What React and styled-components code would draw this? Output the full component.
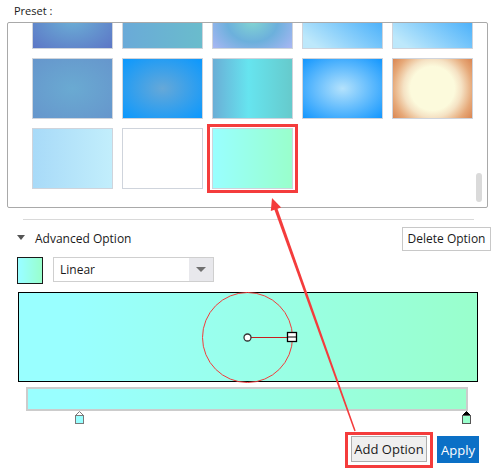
import React from "react";
import styled, { createGlobalStyle } from "styled-components";

const Global = createGlobalStyle`
  html, body { margin: 0; padding: 0; background: #fff; }
  body { font-family: "Open Sans", "Noto Sans", sans-serif; color: #1a1a1a; }
  * { box-sizing: border-box; }
`;

const Page = styled.div`
  position: relative;
  width: 497px;
  height: 469px;
  overflow: hidden;
  background: #fff;
`;

const PresetLabel = styled.div`
  height: 22px;
  padding: 3px 0 0 14px;
  font-size: 11px;
  line-height: 15px;
  color: #1a1a1a;
`;

const PresetBox = styled.div`
  position: relative;
  margin-left: 7px;
  width: 481px;
  height: 186px;
  border: 1px solid #a9a9a9;
  border-radius: 2px;
  overflow: hidden;
`;

const ThumbGrid = styled.div`
  display: grid;
  grid-template-columns: repeat(5, 81px);
  grid-auto-rows: 61px;
  column-gap: 9px;
  row-gap: 9px;
  padding-left: 24px;
  margin-top: -35px;
`;

const Thumb = styled.div`
  position: relative;
  border: 1px solid #cfd4dc;
  background: ${(p) => p.$bg};
  ${(p) =>
    p.$selected &&
    `
    &::after {
      content: "";
      position: absolute;
      left: -6px; right: -6px; top: -5px; bottom: -5px;
      border: 3px solid #f43c3c;
    }
  `}
`;

const ScrollThumb = styled.div`
  position: absolute;
  left: 468px;
  top: 150px;
  width: 6px;
  height: 29px;
  border-radius: 3px;
  background: #dadada;
`;

const Divider = styled.div`
  margin: 11px 0 0 23px;
  width: 451px;
  height: 1px;
  background: #d9d9d9;
`;

const AdvHeader = styled.div`
  display: flex;
  align-items: center;
  justify-content: space-between;
  margin-top: 7px;
  height: 24px;
  padding: 0 6px 0 17px;
`;

const Toggle = styled.div`
  display: flex;
  align-items: center;
  font-size: 12px;
  line-height: 16px;
  color: #1a1a1a;
`;

const Caret = styled.span`
  width: 0;
  height: 0;
  border-left: 4px solid transparent;
  border-right: 4px solid transparent;
  border-top: 5px solid #555;
  margin: 0 10px 4px 0;
`;

const PlainButton = styled.button`
  height: 24px;
  width: ${(p) => p.$w}px;
  padding: 0;
  border: 1px solid #c8c8c8;
  background: ${(p) => (p.$gray ? "#efefef" : "#fff")};
  font-family: inherit;
  font-size: ${(p) => p.$fs || 12}px;
  color: #1a1a1a;
  line-height: 16px;
  cursor: pointer;
`;

const TypeRow = styled.div`
  display: flex;
  align-items: flex-start;
  margin-top: 6px;
  padding-left: 17px;
`;

const Swatch = styled.div`
  width: 26px;
  height: 27px;
  border: 1px solid #1a1a1a;
  background: linear-gradient(to right, #99ffff 12%, #99ffcc);
`;

const Select = styled.div`
  display: flex;
  margin-left: 10px;
  width: 161px;
  height: 25px;
  border: 1px solid #cfcfcf;
  background: #fff;
`;

const SelectText = styled.div`
  flex: 1;
  padding-left: 6px;
  font-size: 12px;
  line-height: 23px;
  color: #1a1a1a;
`;

const SelectArrow = styled.div`
  width: 24px;
  display: flex;
  align-items: center;
  justify-content: center;
  background: #e8e8ec;
  &::after {
    content: "";
    width: 0;
    height: 0;
    border-left: 5px solid transparent;
    border-right: 5px solid transparent;
    border-top: 5px solid #707070;
  }
`;

const Preview = styled.div`
  position: relative;
  margin: 8px 0 0 18px;
  width: 460px;
  height: 90px;
  border: 1px solid #000;
  background: linear-gradient(to right, #99ffff 12%, #99ffcc);
`;

const PreviewSvg = styled.svg`
  display: block;
  overflow: visible;
`;

const BarWrap = styled.div`
  margin: 5px 0 0 26px;
  width: 442px;
`;

const Bar = styled.div`
  height: 24px;
  border: 2px solid #cccccc;
  background: linear-gradient(to right, #99ffff 12%, #99ffcc);
`;

const StopTrack = styled.div`
  position: relative;
  height: 14px;
`;

const StopMark = styled.svg`
  position: absolute;
  top: 0;
  display: block;
`;

const Actions = styled.div`
  display: flex;
  justify-content: flex-end;
  align-items: flex-start;
  gap: 10px;
  margin-top: 11px;
  padding-right: 18px;
`;

const Highlight = styled.div`
  position: relative;
  &::after {
    content: "";
    position: absolute;
    left: -6px; right: -6px; top: -4px; bottom: -6px;
    border: 3px solid #f43c3c;
    pointer-events: none;
  }
`;

const PrimaryButton = styled.button`
  height: 27px;
  width: 42px;
  padding: 0;
  border: none;
  background: #0b70c6;
  color: #fff;
  font-family: inherit;
  font-size: 13px;
  line-height: 16px;
  cursor: pointer;
`;

const Overlay = styled.svg`
  position: absolute;
  left: 0;
  top: 0;
  pointer-events: none;
`;

const thumbs = [
  "radial-gradient(ellipse at center, #6cb0d6 0%, #5c76c6 100%)",
  "linear-gradient(to right, #6aaad8, #6abccc)",
  "radial-gradient(ellipse at 50% 55%, #82d4d2 0%, #6cb0dc 45%, #b4b8f8 100%)",
  "linear-gradient(to top right, #bde8fb 10%, #1898fa 100%)",
  "linear-gradient(to top right, #bde8fb 10%, #1898fa 100%)",
  "radial-gradient(ellipse at center, #6aaad2 0%, #6696cc 100%)",
  "radial-gradient(ellipse at center, #66a8d8 0%, #0a98fe 100%)",
  "linear-gradient(to right, #6aaed6 0%, #66e4ef 45%, #66cacc 100%)",
  "radial-gradient(ellipse at center, #b4e2fc 0%, #1296fe 100%)",
  "radial-gradient(circle at center, #fcfadc 0px, #fcfadc 22px, #f5e2c4 29px, #e6a878 40px, #d2703a 55px)",
  "linear-gradient(to right, #a8daf8, #c2eefc)",
  "#ffffff",
  "linear-gradient(to right, #99ffff, #99ffcc)",
];

const stops = [
  { pos: 0.118, color: "#99ffff", selected: false },
  { pos: 1, color: "#99ffcc", selected: true },
];

function Stop({ pos, color, selected }) {
  const trackW = 442;
  const left = 2 + pos * (trackW - 4) - 4.5;
  return (
    <StopMark width="10" height="14" viewBox="0 0 10 14" style={{ left }}>
      <path
        d="M0.5 4.5 L4.5 0.5 L8.5 4.5 Z"
        fill={selected ? "#000" : "#fff"}
        stroke={selected ? "#000" : "#7a7a7a"}
        strokeWidth="1"
      />
      <rect x="0.5" y="4.5" width="8" height="8" fill={color} stroke={selected ? "#555" : "#7a7a7a"} strokeWidth="1" />
    </StopMark>
  );
}

function Arrow() {
  const ax = 272, ay = 198, ex = 355, ey = 431;
  const dx = ex - ax, dy = ey - ay;
  const len = Math.hypot(dx, dy);
  const ux = dx / len, uy = dy / len;
  const nx = uy, ny = -ux;
  const hl = 12, hw = 5.5;
  const bx = ax + ux * hl, by = ay + uy * hl;
  const p = (x, y) => `${x.toFixed(1)},${y.toFixed(1)}`;
  const head = [p(ax, ay), p(bx + nx * hw, by + ny * hw), p(bx - nx * hw, by - ny * hw)].join(" ");
  const w1 = 1.6, w2 = 0.7;
  const shaft = [
    p(bx - ux * 2 + nx * w1, by - uy * 2 + ny * w1),
    p(ex + nx * w2, ey + ny * w2),
    p(ex - nx * w2, ey - ny * w2),
    p(bx - ux * 2 - nx * w1, by - uy * 2 - ny * w1),
  ].join(" ");
  return (
    <Overlay width="497" height="469" viewBox="0 0 497 469">
      <polygon points={head} fill="#f43c3c" />
      <polygon points={shaft} fill="#f43c3c" />
    </Overlay>
  );
}

export default function App() {
  return (
    <Page>
      <Global />
      <PresetLabel>Preset :</PresetLabel>
      <PresetBox>
        <ThumbGrid>
          {thumbs.map((bg, i) => (
            <Thumb key={i} $bg={bg} $selected={i === 12} />
          ))}
        </ThumbGrid>
        <ScrollThumb />
      </PresetBox>
      <Divider />
      <AdvHeader>
        <Toggle>
          <Caret />
          Advanced Option
        </Toggle>
        <PlainButton $w={89}>Delete Option</PlainButton>
      </AdvHeader>
      <TypeRow>
        <Swatch />
        <Select>
          <SelectText>Linear</SelectText>
          <SelectArrow />
        </Select>
      </TypeRow>
      <Preview>
        <PreviewSvg width="458" height="88" viewBox="0 0 458 88">
          <circle cx="228.5" cy="44.5" r="45" fill="none" stroke="#f23c3c" strokeWidth="1" />
          <line x1="231.5" y1="44.5" x2="268" y2="44.5" stroke="#c81e1e" strokeWidth="1" />
          <circle cx="228.5" cy="44.5" r="3.5" fill="#fff" stroke="#333" strokeWidth="1.3" />
          <rect x="268.5" y="39.5" width="9" height="9" fill="#fff" stroke="#000" strokeWidth="1.3" />
          <line x1="269" y1="44" x2="277" y2="44" stroke="#000" strokeWidth="1" />
        </PreviewSvg>
      </Preview>
      <BarWrap>
        <Bar />
        <StopTrack>
          {stops.map((s, i) => (
            <Stop key={i} {...s} />
          ))}
        </StopTrack>
      </BarWrap>
      <Actions>
        <Highlight>
          <PlainButton $w={76} $gray $fs={13} style={{ height: 26, borderColor: "#adadad" }}>
            Add Option
          </PlainButton>
        </Highlight>
        <PrimaryButton>Apply</PrimaryButton>
      </Actions>
      <Arrow />
    </Page>
  );
}
